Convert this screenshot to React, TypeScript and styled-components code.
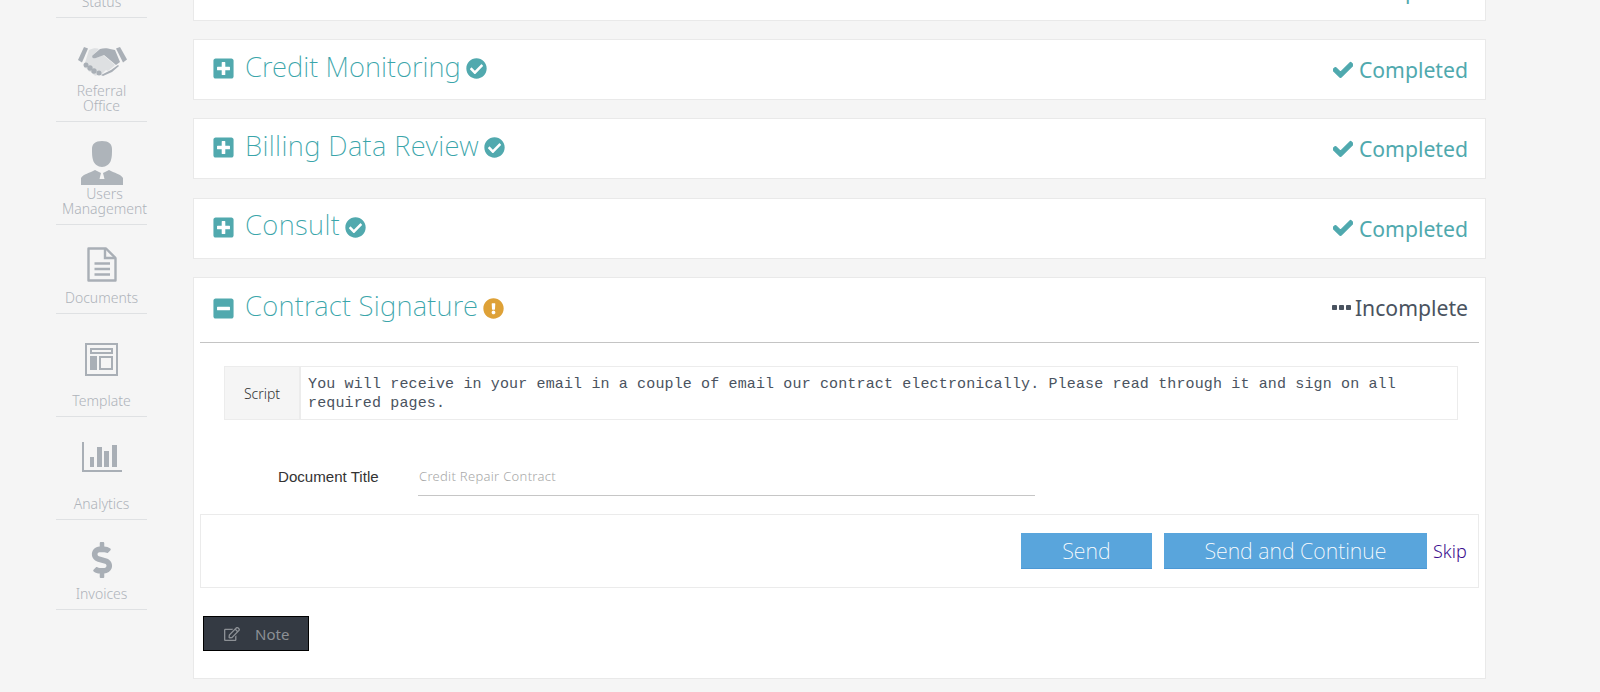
import React from "react";
import styled, { createGlobalStyle } from "styled-components";
import {
  FaPlusSquare,
  FaMinusSquare,
  FaCheckCircle,
  FaCheck,
  FaExclamationCircle,
  FaRegEdit,
  FaDollarSign,
} from "react-icons/fa";

const Global = createGlobalStyle`
  html, body { margin: 0; padding: 0; height: 100%; background: #f5f5f5; overflow: hidden; }
  * { box-sizing: border-box; }
  body { font-family: "Noto Sans", "Open Sans", sans-serif; }
`;

const Page = styled.div`
  display: flex;
  height: 692px;
  overflow: hidden;
  background: #f5f5f5;
`;

const Sidebar = styled.nav`
  width: 91px;
  margin: -22px 46px 0 56px;
  flex: none;
  display: flex;
  flex-direction: column;
`;

const NavItem = styled.a<{ $h: number; $gap: number }>`
  height: ${(p) => p.$h}px;
  display: flex;
  flex-direction: column;
  align-items: center;
  justify-content: flex-end;
  gap: ${(p) => p.$gap}px;
  padding-bottom: 8px;
  border-bottom: 1px solid #dfe1e3;
  color: #a9afb6;
  flex: none;
`;

const NavLabel = styled.span<{ $shift?: number }>`
  font-size: 14px;
  line-height: 15px;
  font-weight: 350;
  text-align: center;
  color: #aeb3ba;
  white-space: pre-line;
  transform: translateX(${(p) => p.$shift ?? 0}px);
`;

const Main = styled.main`
  width: 1293px;
  flex: none;
  margin-top: -40.3px;
  display: flex;
  flex-direction: column;
  gap: 18.33px;
`;

const Card = styled.section`
  background: #fff;
  border: 1px solid #e9e9e9;
  flex: none;
`;

const CardHead = styled.header<{ $h: number; $pb?: number }>`
  height: ${(p) => p.$h}px;
  display: flex;
  align-items: center;
  padding: 0 17px ${(p) => p.$pb ?? 0}px 18px;
`;

const ToggleIcon = styled.span`
  display: flex;
  color: #51a9ae;
  font-size: 23px;
  margin: 0 10px 2px 0;
`;

const Title = styled.h3<{ $track?: number }>`
  margin: 0 5px 6px 0;
  font-size: 27.5px;
  line-height: 34px;
  font-weight: 250;
  letter-spacing: ${(p) => p.$track ?? 0}px;
  color: #3aa5aa;
`;

const StateIcon = styled.span<{ $warn?: boolean }>`
  display: flex;
  font-size: 21px;
  margin-bottom: 2px;
  color: ${(p) => (p.$warn ? "#dea137" : "#51a9ae")};
`;

const Status = styled.div<{ $muted?: boolean }>`
  margin: 0 0 ${(p) => (p.$muted ? 3 : 0)}px auto;
  display: flex;
  align-items: center;
  gap: ${(p) => (p.$muted ? 4 : 6)}px;
  font-size: 21.2px;
  font-weight: 370;
  color: ${(p) => (p.$muted ? "#4a5360" : "#4fa9ae")};
`;

const StatusIcon = styled.span`
  display: flex;
  font-size: 20px;
  svg { stroke: currentColor; stroke-width: 30; }
`;

const Divider = styled.hr`
  margin: 0 6px;
  border: 0;
  border-top: 1px solid #c4c4c4;
`;

const ScriptRow = styled.div`
  margin: 23px 27px 0 30px;
  height: 54px;
  display: flex;
  border: 1px solid #ececec;
`;

const ScriptLabel = styled.div`
  width: 76px;
  flex: none;
  display: flex;
  align-items: center;
  justify-content: center;
  background: #f5f5f5;
  border-right: 2px solid #ececec;
  font-size: 14px;
  font-weight: 350;
  color: #333;
`;

const ScriptText = styled.p`
  margin: 0;
  padding: 8px 7px;
  font-family: "Liberation Mono", monospace;
  font-size: 15px;
  line-height: 19px;
  letter-spacing: 0.14px;
  color: #4a5360;
`;

const Field = styled.div`
  display: flex;
  margin: 35px 0 0 84px;
  height: 41px;
`;

const FieldLabel = styled.label`
  width: 140px;
  flex: none;
  font-family: "Liberation Sans", Arial, sans-serif;
  font-size: 15.1px;
  line-height: 44px;
  color: #333;
`;

const FieldValue = styled.div`
  width: 617px;
  height: 41px;
  padding-left: 1px;
  border-bottom: 1px solid #c6c6c6;
  font-size: 13px;
  font-weight: 350;
  line-height: 43px;
  letter-spacing: 0.3px;
  color: #a8a8a8;
`;

const Actions = styled.div`
  margin: 18px 6px 0;
  height: 74px;
  border: 1px solid #ebebeb;
  display: flex;
  align-items: center;
  justify-content: flex-end;
  padding: 0 11px 0 0;
`;

const PrimaryButton = styled.button<{ $w: number }>`
  width: ${(p) => p.$w}px;
  height: 36px;
  margin-right: 12px;
  padding: 0;
  border: 0;
  border-bottom: 1px solid #4b97d4;
  background: #59a5dc;
  color: #fff;
  font-family: inherit;
  font-size: 21.4px;
  font-weight: 250;
`;

const SkipLink = styled.a`
  margin-left: -6px;
  font-size: 18px;
  font-weight: 350;
  letter-spacing: 0.1px;
  color: #3b0d8e;
`;

const NoteButton = styled.button`
  margin: 28px 0 27px 9px;
  width: 106px;
  height: 35px;
  display: flex;
  align-items: center;
  padding: 0 0 0 20px;
  gap: 15px;
  background: #343a43;
  border: 1px solid #000;
  color: #8c9095;
  font-family: inherit;
  font-size: 15px;
`;

const Handshake = () => (
  <svg width="50" height="31" viewBox="0 0 50 31" fill="#a9afb6">
    <path d="M7 1l4 1.500-6 14-4-2.500z" />
    <path d="M43 1l-4 1.500 7 14 4-3z" />
    <path d="M12 4c4-2 8-2 10-1l-6 6c-1 2 1 4 3 3l7-3 12 10-2 2-5 4-2-1-5 5-3-1c-1 2-3 2-4 1l-3-3c-2 0-3-1-3-3l-3-1c-1 0-1-2-1-2z" opacity="0.3" />
    <path d="M16 9l7-6c3-1 8-1 10 0l5 1 5 12-4 3-12-10-8 3c-3 1-5-1-3-3z" />
    <circle cx="9" cy="19" r="2.500" />
    <circle cx="13" cy="22" r="2.700" />
    <circle cx="17" cy="25" r="2.700" />
    <circle cx="22" cy="27" r="2.500" />
    <path d="M24 29l10-5 7-5 1 1-7 6-9 4z" />
  </svg>
);

const Person = () => (
  <svg width="44" height="44" viewBox="0 0 44 44" fill="#aeb4ba">
    <path d="M22 0c7 0 10 3 10 8 0 4 0 8-1 11-1 4-5 7-9 7s-8-3-9-7c-1-3-1-7-1-11 0-5 3-8 10-8z" />
    <path d="M1 44v-7c2-4 9-5 14-8l6 3-1.500 6h5L23 32l6-3c5 3 12 4 14 8v7z" />
  </svg>
);

const DocIcon = () => (
  <svg width="30" height="35" viewBox="0 0 30 35" fill="none" stroke="#a9afb6" strokeWidth="2.400">
    <path d="M1.500 1.500H19L28.500 11V33.500H1.500Z" strokeLinejoin="round" />
    <path d="M18 1.500V11H28.500" />
    <path d="M7.500 16.500H23M7.500 22H23M7.500 27.500H23" />
  </svg>
);

const TemplateIcon = () => (
  <svg width="33" height="33" viewBox="0 0 33 33" fill="none" stroke="#a9afb6" strokeWidth="2">
    <rect x="1" y="1" width="31" height="31" />
    <rect x="6" y="6" width="21" height="4" />
    <rect x="5" y="13" width="7" height="14" fill="#a9afb6" stroke="none" />
    <rect x="15" y="14" width="12" height="12" />
  </svg>
);

const ChartIcon = () => (
  <svg width="40" height="30" viewBox="0 0 40 30" fill="#a9afb6">
    <rect x="0" y="0" width="2" height="30" />
    <rect x="0" y="28" width="40" height="2" />
    <rect x="8" y="15" width="4" height="10" />
    <rect x="15" y="5" width="5" height="20" />
    <rect x="22" y="9" width="5" height="16" />
    <rect x="30" y="3" width="5" height="22" />
  </svg>
);

const SquareDots = () => (
  <svg width="19" height="6" viewBox="0 0 19 6" fill="#4a5360">
    <rect x="0" y="0" width="5" height="5" rx="0.8" />
    <rect x="7" y="0" width="5" height="5" rx="0.8" />
    <rect x="14" y="0" width="5" height="5" rx="0.8" />
  </svg>
);

const CollapsedCard = ({ title, track }: { title: string; track?: number }) => (
  <Card>
    <CardHead $h={59}>
      <ToggleIcon><FaPlusSquare /></ToggleIcon>
      <Title $track={track}>{title}</Title>
      <StateIcon><FaCheckCircle /></StateIcon>
      <Status>
        <StatusIcon><FaCheck /></StatusIcon>
        Completed
      </Status>
    </CardHead>
  </Card>
);

export default function App() {
  return (
    <Page>
      <Global />
      <Sidebar>
        <NavItem $h={40} $gap={0}><NavLabel>Status</NavLabel></NavItem>
        <NavItem $h={104} $gap={6}><Handshake /><NavLabel>{"Referral\nOffice"}</NavLabel></NavItem>
        <NavItem $h={103} $gap={1}><Person /><NavLabel $shift={3}>{"Users\nManagement"}</NavLabel></NavItem>
        <NavItem $h={89} $gap={8}><DocIcon /><NavLabel>Documents</NavLabel></NavItem>
        <NavItem $h={103} $gap={17}><TemplateIcon /><NavLabel>Template</NavLabel></NavItem>
        <NavItem $h={103} $gap={24}><ChartIcon /><NavLabel>Analytics</NavLabel></NavItem>
        <NavItem $h={90} $gap={8}><FaDollarSign size={36} /><NavLabel>Invoices</NavLabel></NavItem>
      </Sidebar>
      <Main>
        <CollapsedCard title="Intake" />
        <CollapsedCard title="Credit Monitoring" track={0.02} />
        <CollapsedCard title="Billing Data Review" track={0.37} />
        <CollapsedCard title="Consult" track={0.35} />
        <Card>
          <CardHead $h={64} $pb={2}>
            <ToggleIcon><FaMinusSquare /></ToggleIcon>
            <Title $track={0.23}>Contract Signature</Title>
            <StateIcon $warn><FaExclamationCircle /></StateIcon>
            <Status $muted>
              <SquareDots />
              Incomplete
            </Status>
          </CardHead>
          <Divider />
          <ScriptRow>
            <ScriptLabel>Script</ScriptLabel>
            <ScriptText>
              You will receive in your email in a couple of email our contract electronically. Please read through it and sign on all required pages.
            </ScriptText>
          </ScriptRow>
          <Field>
            <FieldLabel>Document Title</FieldLabel>
            <FieldValue>Credit Repair Contract</FieldValue>
          </Field>
          <Actions>
            <PrimaryButton $w={131}>Send</PrimaryButton>
            <PrimaryButton $w={263}>Send and Continue</PrimaryButton>
            <SkipLink>Skip</SkipLink>
          </Actions>
          <NoteButton><FaRegEdit size={16} />Note</NoteButton>
        </Card>
      </Main>
    </Page>
  );
}
